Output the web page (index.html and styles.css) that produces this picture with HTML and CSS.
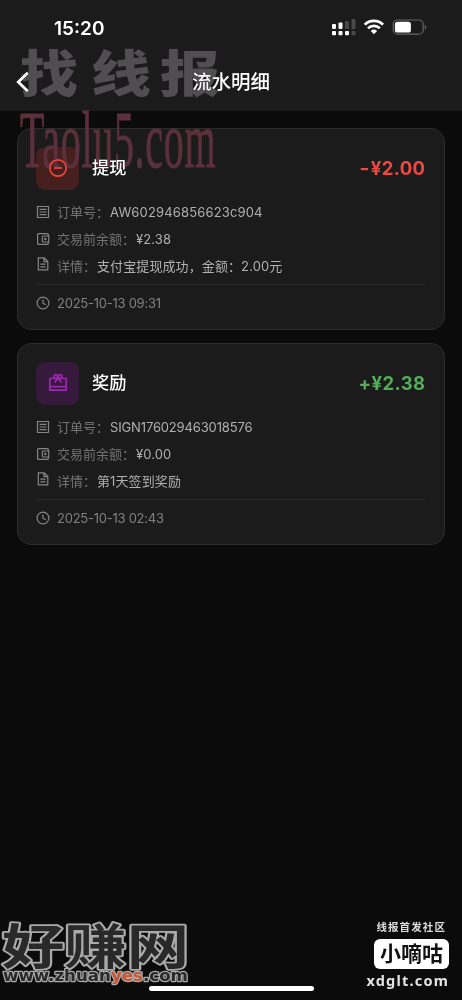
FILE: index.html
```html
<!DOCTYPE html>
<html lang="zh-CN">
<head>
<meta charset="utf-8">
<meta name="viewport" content="width=device-width, initial-scale=1">
<title>流水明细</title>
<link rel="stylesheet" href="styles.css">
</head>
<body>
<svg class="defs" width="0" height="0">
  <symbol id="order" viewBox="0 0 14 14"><path d="M1.5 1.5h11v11h-11zM3.5 4.3h7M3.5 7h7M3.5 9.7h7"/></symbol>
  <symbol id="wallet" viewBox="0 0 14 14"><path d="M12.3 4V2.6a1 1 0 0 0-1-1H2.6a1 1 0 0 0-1 1v8.8a1 1 0 0 0 1 1h8.7a1 1 0 0 0 1-1V10M7.3 4h5.5v6H7.3a1 1 0 0 1-1-1V5a1 1 0 0 1 1-1z"/><circle cx="9.3" cy="7" r=".6"/></symbol>
  <symbol id="doc" viewBox="0 0 14 14"><path d="M2.3.9h5.9l3.6 3.6v8.3H2.3zM8 1v3.7h3.6M4.4 7.2h5.2M4.4 9.8h5.2"/></symbol>
  <symbol id="clock" viewBox="0 0 14 14"><circle cx="7" cy="7" r="5.9"/><path d="M7 3.5V7.2l2.7 1.6"/></symbol>
</svg>
<div class="screen">
  <header class="header">
    <div class="status">
      <span class="clock">15:20</span>
      <svg class="indicators" width="98" height="20" viewBox="0 0 98 20">
        <g fill="#fff"><rect x="1" y="7" width="4" height="5" rx="1"/><rect x="7.5" y="5.5" width="4" height="6.5" rx="1"/><rect x="1" y="14" width="4" height="4.3" rx="1"/><rect x="7.5" y="14" width="4" height="4.3" rx="1"/><rect x="14" y="14" width="4" height="4.3" rx="1"/></g>
        <g fill="#494949"><rect x="14" y="4" width="4" height="8" rx="1"/><rect x="20.5" y="2" width="4" height="10" rx="1"/><rect x="20.5" y="14" width="4" height="4.3" rx="1"/></g>
        <g fill="none" stroke="#fff" stroke-width="2.7"><path d="M33.7 7.6a13.2 13.2 0 0 1 18.4 0"/><path d="M37 11.2a8.5 8.5 0 0 1 11.8 0"/></g>
        <path d="M39.7 13.9a4.8 4.8 0 0 1 6.4 0l-3.2 3.3z" fill="#fff"/>
        <rect x="62.2" y="3" width="30" height="14.2" rx="4.3" fill="none" stroke="#666" stroke-width="1.2"/>
        <rect x="63.9" y="4.8" width="16" height="10.7" rx="2.6" fill="#fff"/>
        <path d="M93.8 7.8c2 .8 2 4 0 4.8z" fill="#666"/>
      </svg>
    </div>
    <div class="nav">
      <svg class="back" width="14" height="22" viewBox="0 0 14 22"><path d="M11.8 1.8 2.3 11l9.5 9.2"/></svg>
      <h1 class="title">流水明细</h1>
    </div>
  </header>
  <main class="list">
    <section class="card">
      <div class="top">
        <div class="tile tile-out"><svg width="20" height="20" viewBox="0 0 20 20"><circle cx="10" cy="10" r="8.2"/><path d="M5.9 10h8.2"/></svg></div>
        <h2 class="kind">提现</h2>
        <strong class="amount minus"><span class="sign">-</span>¥2.00</strong>
      </div>
      <div class="rows">
        <div class="row"><svg class="icon"><use href="#order"/></svg><span class="label">订单号：</span><span class="value code">AW602946856623c904</span></div>
        <div class="row"><svg class="icon"><use href="#wallet"/></svg><span class="label">交易前余额：</span><span class="value">¥2.38</span></div>
        <div class="row"><svg class="icon raised"><use href="#doc"/></svg><span class="label">详情：</span><span class="value">支付宝提现成功，金额：2.00元</span></div>
      </div>
      <div class="time"><svg class="icon"><use href="#clock"/></svg><span>2025-10-13 09:31</span></div>
    </section>
    <section class="card">
      <div class="top">
        <div class="tile tile-gift"><svg width="20" height="20" viewBox="0 0 20 20"><path d="M1.8 5.5h16.4v11.7H1.8zM1.8 13.6h16.4M10 5.3 6.6 9.6M10 5.3l3.4 4.3"/><circle cx="7.7" cy="3.5" r="1.8"/><circle cx="12.3" cy="3.5" r="1.8"/></svg></div>
        <h2 class="kind">奖励</h2>
        <strong class="amount plus">+¥2.38</strong>
      </div>
      <div class="rows">
        <div class="row"><svg class="icon"><use href="#order"/></svg><span class="label">订单号：</span><span class="value serial">SIGN176029463018576</span></div>
        <div class="row"><svg class="icon"><use href="#wallet"/></svg><span class="label">交易前余额：</span><span class="value">¥0.00</span></div>
        <div class="row"><svg class="icon raised"><use href="#doc"/></svg><span class="label">详情：</span><span class="value">第1天签到奖励</span></div>
      </div>
      <div class="time"><svg class="icon"><use href="#clock"/></svg><span>2025-10-13 02:43</span></div>
    </section>
  </main>
  <svg class="mark mark-top" width="230" height="190" viewBox="0 0 230 190">
    <g class="brush"><text transform="translate(20 92) scale(1.16 1)">找</text><text transform="translate(91 92) scale(1.2 1)">线</text><text transform="translate(160 92) scale(1.2 1)">报</text></g>
    <text class="domain" transform="translate(20 167) scale(.5 1)" textLength="391" lengthAdjust="spacing">Taolu5.com</text>
  </svg>
  <svg class="mark mark-left" width="200" height="90" viewBox="0 0 200 90">
    <g class="outlined"><text x="2" y="63" textLength="187" lengthAdjust="spacingAndGlyphs">好赚网</text></g>
    <text class="site" x="3" y="80" textLength="185" lengthAdjust="spacingAndGlyphs">www.zhuan<tspan class="yes">yes</tspan>.com</text>
  </svg>
  <div class="mark mark-right">
    <span class="tagline">线报首发社区</span>
    <span class="badge">小嘀咕</span>
    <span class="url">xdglt.com</span>
  </div>
  <div class="home"></div>
</div>
</body>
</html>
```
FILE: styles.css
```css
* { box-sizing: border-box; }
body { margin: 0; background: #0b0b0b; }
.defs { position: absolute; }
.screen {
  position: relative;
  width: 462px;
  height: 1000px;
  overflow: hidden;
  background: #0b0b0b;
  color: #fff;
  font-family: Inter, "Noto Sans CJK SC", sans-serif;
}
.header { height: 111px; background: #1b1b1b; }
.status {
  display: flex;
  justify-content: space-between;
  height: 54px;
  padding: 17px 33px 0 54px;
}
.clock { padding-top: 1px; font-size: 19px; font-weight: 600; line-height: 22px; }
.nav { display: grid; grid-template-columns: 38px 1fr 38px; align-items: center; height: 56px; }
.back { margin-left: 16px; fill: none; stroke: #fff; stroke-width: 2.8; }
.title { margin: 0; text-align: center; font-size: 19.5px; font-weight: 500; line-height: 28px; }
.list { display: flex; flex-direction: column; gap: 13px; padding: 17px 17.5px 0 17px; }
.card {
  height: 202px;
  padding: 17.5px 18px;
  border: 1px solid #2c2c2c;
  border-radius: 14px;
  background: #1b1b1b;
}
.top { display: flex; align-items: center; height: 43px; }
.tile { display: grid; place-items: center; width: 43px; height: 43px; border-radius: 9px; }
.tile svg { fill: none; stroke-width: 1.7; }
.tile-out { background: #46201f; stroke: #f44336; }
.tile-gift { background: #351a3c; stroke: #9c27b0; }
.kind { margin: 0 0 0 13px; font-size: 17.2px; font-weight: 500; line-height: 24px; }
.amount { margin-left: auto; font-size: 18.5px; font-weight: 700; line-height: 24px; letter-spacing: .4px; }
.sign { display: inline-block; transform: scaleX(1.2); transform-origin: right; margin-right: 1px; }
.minus { color: #ed4841; }
.plus { color: #52ae57; }
.rows { display: grid; grid-template-rows: repeat(3, 26.7px); padding-top: 9px; height: 95px; border-bottom: 1px solid #2b2b2b; }
.row, .time { display: flex; align-items: center; font-size: 13px; white-space: nowrap; }
.icon { flex: none; width: 14px; height: 14px; margin-right: 7px; fill: none; stroke: #858585; stroke-width: 1.2; }
.raised { margin-bottom: 3px; }
.label { margin-right: 1px; color: #747474; }
.value { color: #b0b0b0; letter-spacing: .1px; }
.code { letter-spacing: .15px; }
.serial { letter-spacing: -.15px; }
.time { height: 36px; color: #808080; letter-spacing: -.25px; }

.mark { position: absolute; pointer-events: none; }
.mark-top { left: 0; top: 0; mix-blend-mode: lighten; }
.brush { fill: #504e50; font: 900 50px "Noto Sans CJK SC", sans-serif; }
.domain { fill: #5b303d; stroke: #5b303d; stroke-width: 1; font: 80px "Liberation Serif", serif; }
.mark-left { left: 0; top: 901px; }
.outlined { fill: #292929; stroke: #aaa; stroke-width: 3.5; paint-order: stroke; stroke-linejoin: round; font: 700 48px "Noto Sans CJK SC", sans-serif; }
.site { fill: #292929; stroke: #aaa; stroke-width: 2.5; paint-order: stroke; stroke-linejoin: round; font: 700 16px "DejaVu Sans", sans-serif; }
.yes { fill: #cb5430; }
.mark-right { right: 13px; top: 920px; display: flex; flex-direction: column; align-items: flex-end; }
.tagline { margin-right: 3px; font-size: 10.5px; font-weight: 700; line-height: 16px; letter-spacing: 1.1px; color: #ddd; }
.badge { width: 75px; height: 30px; margin-top: 3px; border-radius: 6px; background: #fff; color: #111; text-align: center; font-size: 21px; font-weight: 700; line-height: 29px; }
.url { margin-top: 1px; font: 700 14.5px/20px "Noto Sans", sans-serif; letter-spacing: 1.2px; color: #e4e4e4; }
.home { position: absolute; left: 149px; top: 986px; width: 165px; height: 5px; border-radius: 3px; background: #fff; }
```
